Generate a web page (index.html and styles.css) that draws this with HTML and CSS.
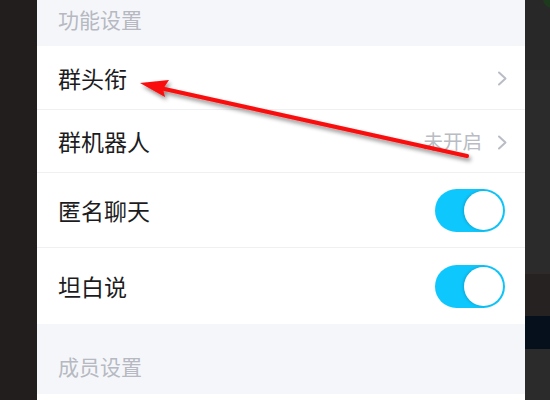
FILE: index.html
```html
<!DOCTYPE html>
<html lang="zh-CN">
<head>
<meta charset="utf-8">
<title>设置</title>
<link rel="stylesheet" href="styles.css">
</head>
<body>
<div class="screen">
  <div class="side-left"></div>
  <main class="panel">
    <div class="section-head first"><span>功能设置</span></div>
    <div class="row r1">
      <span class="label">群头衔</span>
      <span class="right"><svg class="chev" width="11" height="15" viewBox="0 0 11 15"><polyline points="2,1.5 8.5,7.5 2,13.5" fill="none" stroke="#b9bcc4" stroke-width="2" stroke-linecap="round" stroke-linejoin="round"/></svg></span>
    </div>
    <div class="row r2">
      <span class="label">群机器人</span>
      <span class="right"><span class="value">未开启</span><svg class="chev" width="11" height="15" viewBox="0 0 11 15"><polyline points="2,1.5 8.5,7.5 2,13.5" fill="none" stroke="#b9bcc4" stroke-width="2" stroke-linecap="round" stroke-linejoin="round"/></svg></span>
    </div>
    <div class="row r3">
      <span class="label">匿名聊天</span>
      <span class="toggle"><span class="knob"></span></span>
    </div>
    <div class="row r4">
      <span class="label">坦白说</span>
      <span class="toggle"><span class="knob"></span></span>
    </div>
    <div class="section-head second"><span>成员设置</span></div>
    <div class="row last"></div>
  </main>
  <div class="side-right">
    <div class="band b1"><span class="dot"></span></div>
    <div class="band b2"></div>
    <div class="band b3"></div>
    <div class="band b4"></div>
    <div class="band b5"></div>
  </div>
  <svg class="arrow" width="550" height="400" viewBox="0 0 550 400">
    <defs>
      <filter id="sh" x="-10%" y="-50%" width="120%" height="200%">
        <feDropShadow dx="2" dy="3" stdDeviation="2" flood-color="#000" flood-opacity="0.45"/>
      </filter>
    </defs>
    <g filter="url(#sh)">
      <line x1="467" y1="156" x2="160" y2="88" stroke="#fa0a0a" stroke-width="4" stroke-linecap="round"/>
      <polygon points="140,83 169,80 163,89 165,97" fill="#fa0a0a"/>
    </g>
  </svg>
</div>
</body>
</html>
```

FILE: styles.css
```css
* { box-sizing: border-box; }
html, body { margin: 0; padding: 0; }
body {
  width: 550px;
  height: 400px;
  overflow: hidden;
  font-family: "Noto Sans CJK SC", "Noto Sans", sans-serif;
}
.screen {
  position: relative;
  width: 550px;
  height: 400px;
  display: flex;
}
.side-left {
  width: 37px;
  flex: none;
  background: #221e1e;
}
.panel {
  width: 488px;
  flex: none;
  display: flex;
  flex-direction: column;
  background: #f5f6fa;
}
.section-head {
  padding-left: 21px;
  color: #b6b9c1;
  font-size: 21px;
  line-height: 38px;
}
.section-head.first { height: 46px; padding-top: 0; }
.section-head.second { height: 70px; padding-top: 23px; }
.row {
  display: flex;
  align-items: center;
  justify-content: space-between;
  padding-left: 21px;
  background: #fff;
  border-bottom: 1px solid #eef0f3;
}
.row.r1 { height: 64px; padding-right: 17px; }
.row.r2 { height: 63px; padding-right: 17px; }
.row.r3 { height: 75px; padding-right: 20px; }
.row.r4 { height: 76px; padding-right: 20px; border-bottom: none; }
.row.last { flex: 1; border-bottom: none; }
.label {
  font-size: 23px;
  color: #1c1c1e;
  line-height: 1;
  margin-top: 1px;
}
.right {
  display: flex;
  align-items: center;
  gap: 15px;
}
.value {
  font-size: 19.5px;
  color: #b9bcc3;
  line-height: 1;
}
.chev { display: block; margin-top: 2px; }
.toggle {
  width: 70px;
  height: 43px;
  border-radius: 22px;
  background: #0ec8fd;
  display: flex;
  justify-content: flex-end;
  align-items: center;
  padding-right: 2px;
}
.knob {
  width: 39px;
  height: 39px;
  border-radius: 50%;
  background: #fff;
  box-shadow: -1px 0 3px rgba(0, 60, 90, 0.25);
}
.side-right {
  width: 25px;
  flex: none;
  display: flex;
  flex-direction: column;
  background: #2a2a2a;
}
.band { flex: none; position: relative; }
.b1 { height: 70px; background: #282828; overflow: hidden; }
.b2 { height: 202px; background: #2b2b2b; }
.b3 { height: 44px; background: #272222; border-top: 2px solid #2f2a2a; }
.b4 { height: 33px; background: #06101d; }
.b5 { flex: 1; background: #2b2b2b; }
.dot {
  position: absolute;
  left: 18px;
  top: -10px;
  width: 18px;
  height: 18px;
  border-radius: 50%;
  background: #1e3a1c;
}
.arrow {
  position: absolute;
  left: 0;
  top: 0;
  pointer-events: none;
}
```
